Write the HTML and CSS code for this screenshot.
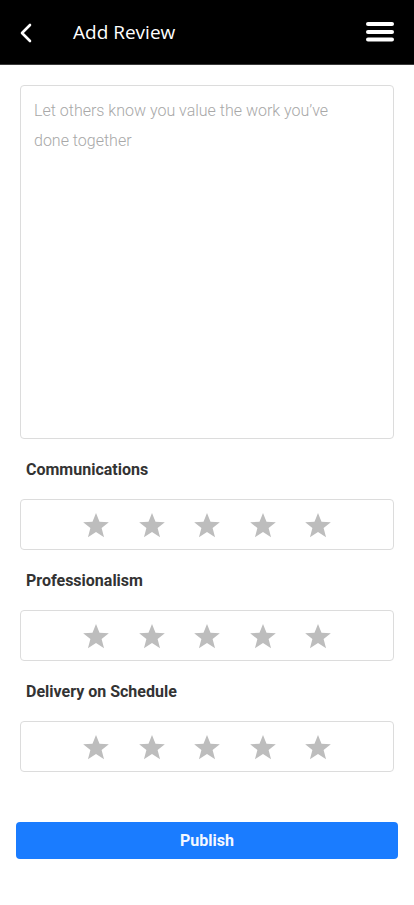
FILE: index.html
```html
<!DOCTYPE html>
<html>
<head>
<meta charset="utf-8">
<link rel="stylesheet" href="styles.css">
</head>
<body>
<header class="topbar">
  <svg class="back" width="14" height="20" viewBox="0 0 14 20"><path d="M11 2 L3 10 L11 18" fill="none" stroke="#fff" stroke-width="2.6" stroke-linecap="round" stroke-linejoin="round"/></svg>
  <h1 class="title">Add Review</h1>
  <svg class="menu" width="28" height="20" viewBox="0 0 28 20"><rect x="0" y="0" width="28" height="4" rx="2" fill="#fff"/><rect x="0" y="8" width="28" height="4" rx="2" fill="#fff"/><rect x="0" y="15.5" width="28" height="4" rx="2" fill="#fff"/></svg>
</header>
<main class="content">
  <div class="textarea">Let others know you value the work you’ve done together</div>
  <section class="rating">
    <div class="label">Communications</div>
    <div class="stars">
      <svg class="star" viewBox="0 0 24 24"><path d="M12 1.8 L15 9.2 L23 9.6 L16.8 14.6 L18.9 22.4 L12 18 L5.1 22.4 L7.2 14.6 L1 9.6 L9 9.2 Z"/></svg>
      <svg class="star" viewBox="0 0 24 24"><path d="M12 1.8 L15 9.2 L23 9.6 L16.8 14.6 L18.9 22.4 L12 18 L5.1 22.4 L7.2 14.6 L1 9.6 L9 9.2 Z"/></svg>
      <svg class="star" viewBox="0 0 24 24"><path d="M12 1.8 L15 9.2 L23 9.6 L16.8 14.6 L18.9 22.4 L12 18 L5.1 22.4 L7.2 14.6 L1 9.6 L9 9.2 Z"/></svg>
      <svg class="star" viewBox="0 0 24 24"><path d="M12 1.8 L15 9.2 L23 9.6 L16.8 14.6 L18.9 22.4 L12 18 L5.1 22.4 L7.2 14.6 L1 9.6 L9 9.2 Z"/></svg>
      <svg class="star" viewBox="0 0 24 24"><path d="M12 1.8 L15 9.2 L23 9.6 L16.8 14.6 L18.9 22.4 L12 18 L5.1 22.4 L7.2 14.6 L1 9.6 L9 9.2 Z"/></svg>
    </div>
  </section>
  <section class="rating">
    <div class="label">Professionalism</div>
    <div class="stars">
      <svg class="star" viewBox="0 0 24 24"><path d="M12 1.8 L15 9.2 L23 9.6 L16.8 14.6 L18.9 22.4 L12 18 L5.1 22.4 L7.2 14.6 L1 9.6 L9 9.2 Z"/></svg>
      <svg class="star" viewBox="0 0 24 24"><path d="M12 1.8 L15 9.2 L23 9.6 L16.8 14.6 L18.9 22.4 L12 18 L5.1 22.4 L7.2 14.6 L1 9.6 L9 9.2 Z"/></svg>
      <svg class="star" viewBox="0 0 24 24"><path d="M12 1.8 L15 9.2 L23 9.6 L16.8 14.6 L18.9 22.4 L12 18 L5.1 22.4 L7.2 14.6 L1 9.6 L9 9.2 Z"/></svg>
      <svg class="star" viewBox="0 0 24 24"><path d="M12 1.8 L15 9.2 L23 9.6 L16.8 14.6 L18.9 22.4 L12 18 L5.1 22.4 L7.2 14.6 L1 9.6 L9 9.2 Z"/></svg>
      <svg class="star" viewBox="0 0 24 24"><path d="M12 1.8 L15 9.2 L23 9.6 L16.8 14.6 L18.9 22.4 L12 18 L5.1 22.4 L7.2 14.6 L1 9.6 L9 9.2 Z"/></svg>
    </div>
  </section>
  <section class="rating">
    <div class="label">Delivery on Schedule</div>
    <div class="stars">
      <svg class="star" viewBox="0 0 24 24"><path d="M12 1.8 L15 9.2 L23 9.6 L16.8 14.6 L18.9 22.4 L12 18 L5.1 22.4 L7.2 14.6 L1 9.6 L9 9.2 Z"/></svg>
      <svg class="star" viewBox="0 0 24 24"><path d="M12 1.8 L15 9.2 L23 9.6 L16.8 14.6 L18.9 22.4 L12 18 L5.1 22.4 L7.2 14.6 L1 9.6 L9 9.2 Z"/></svg>
      <svg class="star" viewBox="0 0 24 24"><path d="M12 1.8 L15 9.2 L23 9.6 L16.8 14.6 L18.9 22.4 L12 18 L5.1 22.4 L7.2 14.6 L1 9.6 L9 9.2 Z"/></svg>
      <svg class="star" viewBox="0 0 24 24"><path d="M12 1.8 L15 9.2 L23 9.6 L16.8 14.6 L18.9 22.4 L12 18 L5.1 22.4 L7.2 14.6 L1 9.6 L9 9.2 Z"/></svg>
      <svg class="star" viewBox="0 0 24 24"><path d="M12 1.8 L15 9.2 L23 9.6 L16.8 14.6 L18.9 22.4 L12 18 L5.1 22.4 L7.2 14.6 L1 9.6 L9 9.2 Z"/></svg>
    </div>
  </section>
  <div class="actions">
    <button class="publish">Publish</button>
  </div>
</main>
</body>
</html>
```
FILE: styles.css
```css
* { box-sizing: border-box; }
html, body { margin: 0; padding: 0; background: #fff; }
body { font-family: Roboto, "Liberation Sans", sans-serif; width: 414px; }

.topbar {
  height: 65px;
  background: #000;
  border-bottom: 1px solid #3a3a3a;
  display: flex;
  align-items: center;
  padding: 0 20px 0 19px;
}
.back { display: block; margin-top: 1px; }
.title {
  margin: 0 0 0 40px;
  color: #fff;
  font-family: "Open Sans", "Noto Sans", sans-serif;
  font-weight: 400;
  font-size: 19px;
  flex: 1;
}
.menu { display: block; margin-top: 0; }

.content { padding: 20px 20px 0 20px; }

.textarea {
  height: 354px;
  border: 1px solid #dcdcdc;
  border-radius: 4px;
  padding: 10px 60px 0 13px;
  color: #a8a8a8;
  font-size: 16px;
  font-weight: 300;
  line-height: 30px;
}

.rating { margin-top: 18px; }
.label {
  color: #333;
  font-weight: 700;
  font-size: 16px;
  line-height: 26px;
  padding-left: 6px;
  margin-bottom: 16px;
}
.stars {
  height: 51px;
  border: 1px solid #dcdcdc;
  border-radius: 4px;
  display: flex;
  justify-content: center;
  align-items: center;
  gap: 27.5px;
}
.star { width: 28px; height: 28px; fill: #bdbdbd; display: block; }

.actions { margin: 50px -4px 0 -4px; }
.publish {
  width: 100%;
  height: 37px;
  border: none;
  border-radius: 4px;
  background: #1a7cff;
  color: #f4f8ff;
  font-family: Roboto, "Liberation Sans", sans-serif;
  font-weight: 700;
  font-size: 16px;
}
```
